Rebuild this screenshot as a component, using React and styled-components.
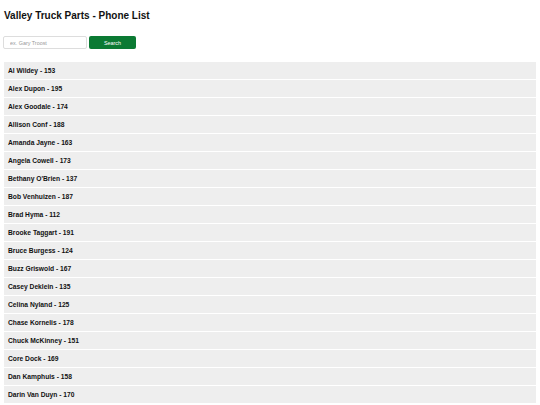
import React from "react";
import styled, { createGlobalStyle } from "styled-components";

const Global = createGlobalStyle`
  html, body { margin: 0; padding: 0; background: #fff; }
  body { font-family: "Liberation Sans", Arial, sans-serif; color: #111; }
`;

const Page = styled.div`
  padding: 4px 4px 0 4px;
`;

const Title = styled.h1`
  font-size: 10px;
  font-weight: bold;
  margin: 5px 0 13px 0;
  line-height: 14px;
`;

const SearchBar = styled.form`
  display: flex;
  gap: 2px;
  align-items: center;
  margin-bottom: 13px;
  margin-left: -1px;
`;

const Input = styled.input`
  box-sizing: border-box;
  width: 84px;
  height: 13px;
  border: 1px solid #ddd;
  border-radius: 2px;
  padding: 0 6px;
  font-family: inherit;
  font-size: 5.4px;
  outline: none;
  &::placeholder { color: #999; }
`;

const Button = styled.button`
  box-sizing: border-box;
  width: 47px;
  height: 13px;
  border: none;
  border-radius: 2px;
  background: #0b7a33;
  color: #fff;
  font-family: inherit;
  font-size: 5.4px;
  padding: 0;
`;

const List = styled.ul`
  list-style: none;
  margin: 0;
  padding: 0;
  width: 532px;
`;

const Row = styled.li`
  box-sizing: border-box;
  height: 17px;
  margin-bottom: 1px;
  background: #eee;
  display: flex;
  align-items: center;
  padding-left: 4px;
  padding-bottom: 1px;
  font-size: 6.7px;
  font-weight: bold;
`;

const people = [
  ["Al Wildey", 153],
  ["Alex Dupon", 195],
  ["Alex Goodale", 174],
  ["Allison Conf", 188],
  ["Amanda Jayne", 163],
  ["Angela Cowell", 173],
  ["Bethany O'Brien", 137],
  ["Bob Venhuizen", 187],
  ["Brad Hyma", 112],
  ["Brooke Taggart", 191],
  ["Bruce Burgess", 124],
  ["Buzz Griswold", 167],
  ["Casey Deklein", 135],
  ["Celina Nyland", 125],
  ["Chase Kornelis", 178],
  ["Chuck McKinney", 151],
  ["Core Dock", 169],
  ["Dan Kamphuis", 158],
  ["Darin Van Duyn", 170],
];

export default function App() {
  return (
    <Page>
      <Global />
      <Title>Valley Truck Parts - Phone List</Title>
      <SearchBar onSubmit={(e) => e.preventDefault()}>
        <Input placeholder="ex. Gary Troost" />
        <Button type="submit">Search</Button>
      </SearchBar>
      <List>
        {people.map(([n, x]) => (
          <Row key={n}>{`${n} - ${x}`}</Row>
        ))}
      </List>
    </Page>
  );
}
